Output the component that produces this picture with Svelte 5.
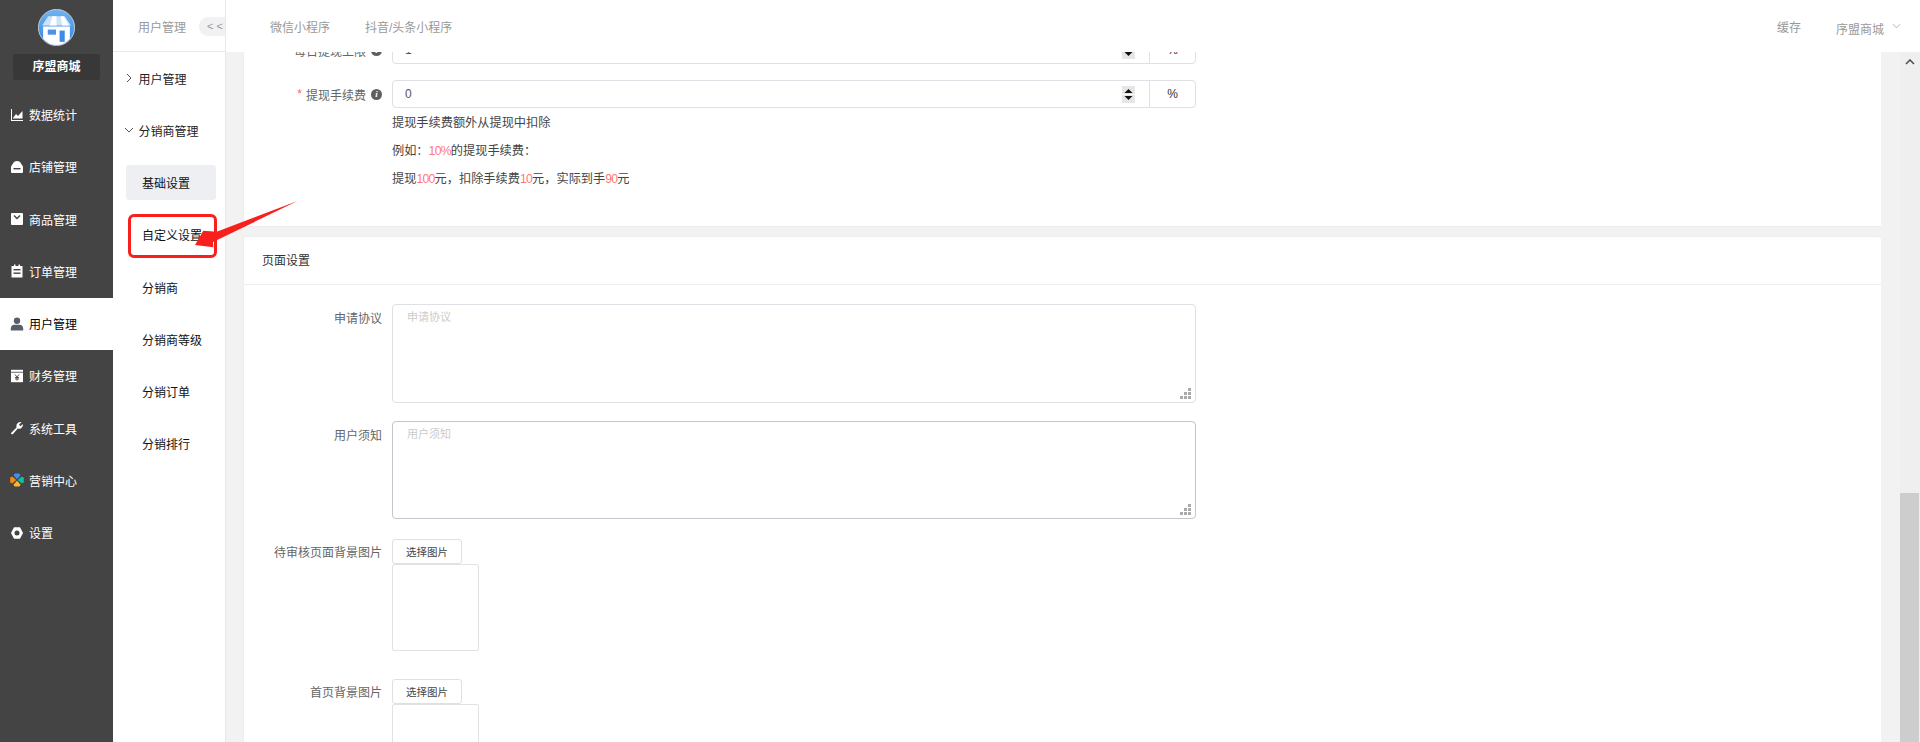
<script>
	const menus = [
		{ name: '数据统计', icon: 'chart' },
		{ name: '店铺管理', icon: 'store' },
		{ name: '商品管理', icon: 'bag' },
		{ name: '订单管理', icon: 'order' },
		{ name: '用户管理', icon: 'user', active: true },
		{ name: '财务管理', icon: 'finance' },
		{ name: '系统工具', icon: 'tool' },
		{ name: '营销中心', icon: 'market' },
		{ name: '设置', icon: 'gear' }
	];
	const subItems = ['基础设置', '自定义设置', '分销商', '分销商等级', '分销订单', '分销排行'];
</script>

<div class="app">
	<aside class="sidebar">
		<div class="logo">
			<svg viewBox="0 0 36 36" width="37" height="37">
				<defs>
					<linearGradient id="sky" x1="0" y1="0" x2="0" y2="1">
						<stop offset="0" stop-color="#6fb4f2" />
						<stop offset="1" stop-color="#2f86e6" />
					</linearGradient>
				</defs>
				<circle cx="18" cy="18" r="17.6" fill="url(#sky)" stroke="#d8d8d8" stroke-width="0.8" />
				<path d="M5 29 V17 H31 V29 A17 17 0 0 1 5 29Z" fill="#fff" />
				<path d="M10 7 H26 L32 16 H4Z" fill="#cfe2f8" />
				<path d="M14 7 H18 V16 H11.5Z M22 7 L25 7 L30 16 H23.5Z" fill="#fff" />
				<rect x="9.5" y="20" width="8" height="5" fill="#4d94e8" />
				<rect x="21" y="21" width="5" height="11" fill="#3f8ae4" />
			</svg>
		</div>
		<div class="shop">序盟商城</div>
		<nav class="menu">
			{#each menus as m}
				<div class="menu-item" class:active={m.active}>
					<svg class="icon" viewBox="0 0 14 14" width="14" height="14">
						{#if m.icon === 'chart'}
							<path d="M1 1 V13 H13 V12 H2 V1Z" fill="currentColor" />
							<path d="M3 10 L6 6 L8 8 L12.5 3 V10.5 H3Z" fill="currentColor" />
						{:else if m.icon === 'store'}
							<path d="M1 6.5 L4 2 Q7 0 10 2 L13 6.5 V12 Q13 13 12 13 H2 Q1 13 1 12Z" fill="currentColor" />
							<rect x="3.5" y="8" width="7" height="1.4" fill="#444" />
						{:else if m.icon === 'bag'}
							<path d="M2 1 H12 Q13 1 13 2 V12 Q13 13 12 13 H2 Q1 13 1 12 V2 Q1 1 2 1Z" fill="currentColor" />
							<path d="M4 3.5 L7 6.5 L10 3.5" fill="none" stroke="#444" stroke-width="1.4" />
						{:else if m.icon === 'order'}
							<path d="M1.5 2 H4 V0.5 H5.5 V2 H8.5 V0.5 H10 V2 H12.5 V13.5 H1.5Z" fill="currentColor" />
							<rect x="3.5" y="5" width="7" height="1.4" fill="#444" />
							<rect x="3.5" y="8.5" width="7" height="1.4" fill="#444" />
						{:else if m.icon === 'user'}
							<circle cx="7" cy="3.8" r="3.2" fill="currentColor" />
							<path d="M0.8 13.5 V11.5 Q1 8 4.5 7.8 H9.5 Q13 8 13.2 11.5 V13.5Z" fill="currentColor" />
						{:else if m.icon === 'finance'}
							<rect x="1" y="0.8" width="12" height="2" fill="currentColor" />
							<path d="M1 3.6 H13 V13.2 H1Z" fill="currentColor" />
							<path d="M5 5.5 L7 8 L9 5.5 M5 8.5 H9 M5 10 H9 M7 8 V11.5" fill="none" stroke="#444" stroke-width="0.9" />
						{:else if m.icon === 'tool'}
							<path d="M1 12 L6.5 6.5 Q5.8 3 8.5 1.5 Q10 0.8 11.5 1.3 L9 3.6 L10.4 5.2 L13 3 Q13.4 5.8 11.2 7.2 Q9.5 8 7.8 7.6 L3 13 Q1.8 13.6 1 12.8Z" fill="currentColor" />
						{:else if m.icon === 'market'}
							<path d="M7 6.2 L3.9 2.8 Q3.3 1.4 4.8 0.6 H9.2 Q10.7 1.4 10.1 2.8Z" fill="#3f8ff0" />
							<path d="M6.2 7 L2.6 3.7 Q1 3.4 0.2 4.8 V9.2 Q1 10.6 2.6 10.3Z" fill="#f58a0b" />
							<path d="M7.8 7 L11.4 3.7 Q13 3.4 13.8 4.8 V9.2 Q13 10.6 11.4 10.3Z" fill="#12c0a0" />
							<path d="M7 7.8 L3.9 11.2 Q3.3 12.6 4.8 13.4 H9.2 Q10.7 12.6 10.1 11.2Z" fill="#f9b732" />
						{:else}
							<path d="M4 1.2 H10 L13 7 L10 12.8 H4 L1 7Z" fill="currentColor" />
							<circle cx="7" cy="7" r="2.5" fill="#444" />
						{/if}
					</svg>
					<span>{m.name}</span>
				</div>
			{/each}
		</nav>
	</aside>

	<aside class="subnav">
		<div class="subnav-head">
			<span>用户管理</span>
			<span class="collapse">&lt; &lt;</span>
		</div>
		<div class="group">
			<svg viewBox="0 0 8 10" width="8" height="10"><path d="M2 1 L6 5 L2 9" fill="none" stroke="#555" /></svg>
			用户管理
		</div>
		<div class="group">
			<svg viewBox="0 0 10 8" width="10" height="8"><path d="M1 2 L5 6 L9 2" fill="none" stroke="#555" /></svg>
			分销商管理
		</div>
		<div class="sub-list">
			{#each subItems as item, i}
				<div class="sub-item" class:current={i === 0}>{item}</div>
			{/each}
		</div>
	</aside>

	<div class="main">
		<header class="topbar">
			<div class="tabs">
				<span>微信小程序</span>
				<span>抖音/头条小程序</span>
			</div>
			<div class="actions">
				<span>缓存</span>
				<span class="account">序盟商城</span>
				<svg viewBox="0 0 10 6" width="9" height="6"><path d="M1 1 L5 5 L9 1" fill="none" stroke="#aaa" /></svg>
			</div>
		</header>

		<div class="body">
			<div class="page">
				<section class="card first">
					<div class="row clipped">
						<div class="label">每日提现上限<i class="info">i</i></div>
						<div class="field">
							<input value="1" readonly />
							<svg class="spin" viewBox="0 0 13 17" width="13" height="17">
								<rect width="13" height="17" fill="#e6e6e6" />
								<rect y="8" width="13" height="1" fill="#fff" />
								<path d="M6.5 3 L10.5 7 H2.5Z M6.5 14 L10.5 10 H2.5Z" fill="#111" />
							</svg>
							<span class="addon">%</span>
						</div>
					</div>
					<div class="row">
						<div class="label"><em>*</em>提现手续费<i class="info">i</i></div>
						<div class="field">
							<input value="0" readonly />
							<svg class="spin" viewBox="0 0 13 17" width="13" height="17">
								<rect width="13" height="17" fill="#e6e6e6" />
								<rect y="8" width="13" height="1" fill="#fff" />
								<path d="M6.5 3 L10.5 7 H2.5Z M6.5 14 L10.5 10 H2.5Z" fill="#111" />
							</svg>
							<span class="addon">%</span>
						</div>
					</div>
					<div class="help">
						<p>提现手续费额外从提现中扣除</p>
						<p>例如：<b>10%</b>的提现手续费：</p>
						<p>提现<b>100</b>元，扣除手续费<b>10</b>元，实际到手<b>90</b>元</p>
					</div>
				</section>

				<section class="card second">
					<h2>页面设置</h2>
					<div class="form">
						<div class="area-row one">
							<div class="label">申请协议</div>
							<div class="area">
								<textarea placeholder="申请协议" readonly></textarea>
								<span class="grip"></span>
							</div>
						</div>
						<div class="area-row two">
							<div class="label">用户须知</div>
							<div class="area hover">
								<textarea placeholder="用户须知" readonly></textarea>
								<span class="grip"></span>
							</div>
						</div>
						<div class="pic-row">
							<div class="label">待审核页面背景图片</div>
							<div>
								<button>选择图片</button>
								<div class="pic"></div>
							</div>
						</div>
						<div class="pic-row">
							<div class="label">首页背景图片</div>
							<div>
								<button>选择图片</button>
								<div class="pic"></div>
							</div>
						</div>
					</div>
				</section>
			</div>
			<div class="gutter"></div>
			<div class="scrollbar">
				<svg viewBox="0 0 10 6" width="10" height="6"><path d="M1 5 L5 1 L9 5" fill="none" stroke="#505050" stroke-width="1.6" /></svg>
				<div class="thumb"></div>
			</div>
		</div>
	</div>

	<!-- annotation drawn over the screenshot -->
	<div class="mark"></div>
	<svg class="arrow" viewBox="0 0 120 60" width="120" height="60">
		<path d="M117.5 1 L36.7 31.7 L23.3 30.7 L15 45 L33.3 47.3 L33 42Z" fill="#f8201c" />
	</svg>
</div>

<style>
	:global(body) {
		margin: 0;
		overflow: hidden;
		font-family: 'Liberation Sans', 'Noto Sans CJK SC', sans-serif;
		font-size: 12px;
	}

	.app {
		position: relative;
		display: flex;
		width: 1920px;
		height: 742px;
		overflow: hidden;
		background: #fff;
	}

	/* first level menu */
	.sidebar {
		flex: 0 0 113px;
		background: #444;
		color: #fff;
	}

	.logo {
		display: flex;
		justify-content: center;
		padding-top: 9px;
		height: 45px;
	}

	.shop {
		margin: 0 13px;
		height: 26px;
		line-height: 26px;
		border-radius: 3px;
		background: #383838;
		text-align: center;
		font-weight: 700;
	}

	.menu {
		margin-top: 9px;
	}

	.menu-item {
		display: flex;
		align-items: center;
		height: 52.25px;
		box-sizing: border-box;
		padding: 0 0 1px 10px;
		gap: 5px;
	}

	.menu-item .icon {
		flex: none;
	}

	.menu-item.active {
		background: #fff;
		color: #000;
	}

	.menu-item.active .icon {
		color: #56606a;
	}

	/* second level menu */
	.subnav {
		flex: 0 0 112px;
		border-right: 1px solid #e8e8ec;
		color: #222;
	}

	.subnav-head {
		display: flex;
		align-items: center;
		justify-content: space-between;
		height: 50px;
		padding: 1px 0 0 25px;
		border-bottom: 1px solid #e8e8ec;
		color: #999;
	}

	.collapse {
		width: 26px;
		height: 19px;
		line-height: 18px;
		padding-left: 8px;
		box-sizing: border-box;
		border-radius: 9px 0 0 9px;
		background: #f1f1f3;
		color: #999;
		font-size: 11px;
	}

	.group {
		display: flex;
		align-items: center;
		height: 52.25px;
		gap: 5.5px;
		padding-left: 11px;
	}

	.group svg {
		width: 10px;
		flex: none;
		margin-right: -1px;
	}

	.sub-list {
		padding-top: 8.5px;
	}

	.sub-item {
		display: flex;
		align-items: center;
		height: 35px;
		margin: 0 9px 17.25px 13px;
		padding-left: 16px;
		border-radius: 3px;
		white-space: nowrap;
		color: #111;
	}

	.sub-item.current {
		background: #eeeff3;
	}

	/* right side */
	.main {
		flex: 1;
		min-width: 0;
		display: flex;
		flex-direction: column;
	}

	.topbar {
		position: relative;
		z-index: 2;
		flex: 0 0 52px;
		display: flex;
		align-items: center;
		justify-content: space-between;
		background: #fff;
		color: #999;
	}

	.tabs {
		display: flex;
		gap: 35px;
		padding-left: 44px;
	}

	.actions {
		display: flex;
		align-items: center;
		padding-right: 19px;
	}

	.account {
		margin-left: 35px;
		margin-right: 8px;
		position: relative;
		top: 2px;
	}

	.body {
		flex: 1;
		min-height: 0;
		display: flex;
		background: #f2f2f2;
		overflow: hidden;
	}

	.page {
		flex: 0 0 1637px;
		margin-left: 18px;
	}

	.card {
		background: #fff;
		box-shadow: 0 0 0 1px #eeeef1;
	}

	.card.first {
		margin-top: -16px;
		padding-bottom: 33px;
		height: 190px;
		box-sizing: border-box;
	}

	.card.second {
		margin-top: 11px;
		border-radius: 3px 3px 0 0;
	}

	.row {
		display: flex;
		align-items: center;
		margin-bottom: 16px;
	}

	.label {
		flex: 0 0 138px;
		margin-right: 10px;
		text-align: right;
		color: #666;
		white-space: nowrap;
	}

	.row .label {
		display: flex;
		align-items: center;
		justify-content: flex-end;
		margin-right: 10px;
	}

	.label em {
		font-style: normal;
		color: #f66;
		margin-right: 4px;
	}

	.info {
		display: inline-block;
		width: 11px;
		height: 11px;
		line-height: 11px;
		margin-left: 5px;
		border-radius: 50%;
		background: #5f5f5f;
		color: #fff;
		font: italic 700 9px/11px 'Liberation Serif', serif;
		text-align: center;
	}

	.field {
		display: flex;
		align-items: center;
		width: 804px;
		height: 28px;
		box-sizing: border-box;
		border: 1px solid #dfdfe6;
		border-radius: 4px;
		color: #555;
	}

	.field input {
		flex: 1;
		min-width: 0;
		border: 0;
		outline: 0;
		padding: 0 0 0 12px;
		background: none;
		color: #555;
		font: inherit;
	}

	.spin {
		flex: none;
		margin-right: 14px;
	}

	.addon {
		flex: 0 0 46px;
		box-sizing: border-box;
		height: 100%;
		line-height: 26px;
		border-left: 1px solid #dfdfe6;
		text-align: center;
		color: #333;
	}

	.help {
		margin: -15px 0 0 148px;
		font-size: 12.2px;
		color: #444;
	}

	.help p {
		margin: 0;
		line-height: 28px;
	}

	.help b {
		font-weight: 400;
		letter-spacing: -0.7px;
		color: #f77;
	}

	.second h2 {
		margin: 0;
		height: 47px;
		line-height: 49px;
		padding-left: 18px;
		border-bottom: 1px solid #eeeef1;
		font-size: 12px;
		font-weight: 400;
		color: #333;
	}

	.form {
		padding-top: 19px;
	}

	.area-row {
		display: flex;
		margin-bottom: 18px;
	}

	.area-row .label {
		padding-top: 5px;
	}

	.area {
		position: relative;
		width: 804px;
		height: 99px;
	}

	.area textarea {
		display: block;
		width: 100%;
		height: 100%;
		box-sizing: border-box;
		padding: 3px 14px;
		border: 1px solid #dfdfe6;
		border-radius: 4px;
		outline: 0;
		resize: none;
		font: inherit;
		font-size: 11px;
	}

	.area textarea::placeholder {
		color: #ccc;
	}

	.area.hover textarea {
		border-color: #c4c4cc;
	}

	.two {
		margin-bottom: 20px;
	}

	.two .area {
		height: 98px;
	}

	.grip {
		position: absolute;
		right: 5px;
		bottom: 4px;
		width: 3px;
		height: 3px;
		background: #aaa;
		box-shadow: -4px 0 #aaa, -8px 0 #aaa, 0 -4px #aaa, -4px -4px #aaa, 0 -8px #aaa;
	}

	.pic-row {
		display: flex;
		margin-bottom: 28px;
	}

	.pic-row .label {
		padding-top: 4px;
	}

	button {
		display: block;
		width: 70px;
		height: 25px;
		padding: 0;
		border: 1px solid #dfdfe6;
		border-radius: 3px;
		background: #fff;
		color: #444;
		font: inherit;
		font-size: 10.5px;
	}

	.pic {
		width: 87px;
		height: 87px;
		box-sizing: border-box;
		border: 1px solid #e2e2e6;
		border-radius: 2px;
	}

	.gutter {
		flex: 1;
		background: #f2f2f2;
	}

	.scrollbar {
		flex: 0 0 20px;
		margin-left: 1px;
		display: flex;
		flex-direction: column;
		align-items: center;
		background: #efefef;
		padding-right: 1px;
		box-sizing: border-box;
		position: relative;
	}

	.scrollbar svg {
		margin-top: 7px;
	}

	.thumb {
		position: absolute;
		top: 441px;
		left: 0;
		width: 19px;
		height: 249px;
		background: #cdcdcd;
	}

	/* red annotation */
	.mark {
		position: absolute;
		left: 128px;
		top: 214px;
		width: 89px;
		height: 44px;
		box-sizing: border-box;
		border: 3.5px solid #f8201c;
		border-radius: 6px;
	}

	.arrow {
		position: absolute;
		left: 180px;
		top: 200px;
	}
</style>
